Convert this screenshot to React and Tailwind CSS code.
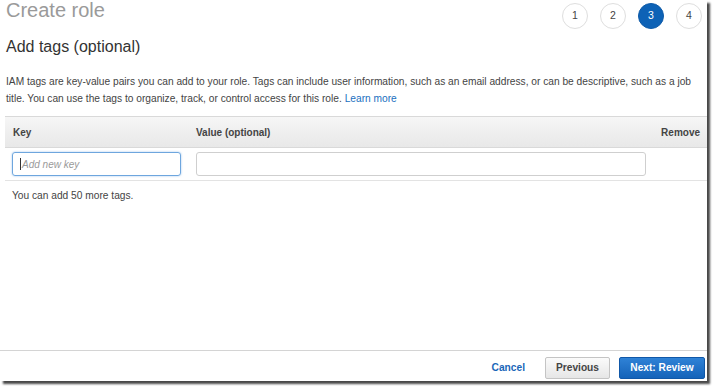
import React from 'react';

// --- Passos do assistente ---
const Step = ({ n, active }) => (
    <div
        className={
            active
                ? 'w-[26px] h-[26px] rounded-full bg-[#0d62b6] border border-[#0d5aa8] flex items-center justify-center text-white text-[10.5px]'
                : 'w-[26px] h-[26px] rounded-full bg-white border border-[#dedede] flex items-center justify-center text-[#444] text-[10.5px]'
        }
    >
        {n}
    </div>
);

export default function App() {
    return (
        <div className="w-[714px] h-[386px] bg-white overflow-hidden" style={{ fontFamily: '"Liberation Sans", Arial, sans-serif' }}>
            <div className="w-[707px] h-[381px] bg-white flex flex-col shadow-[3px_3px_2px_rgba(40,40,40,0.85)]">
                {/* CABEÇALHO */}
                <div className="flex justify-between items-start pl-[6px] pr-[5px]">
                    <h1 className="text-[20px] leading-[20px] text-[#9a9a9a]">Create role</h1>
                    <div className="flex gap-[12px] pt-[3px]">
                        <Step n={1} />
                        <Step n={2} />
                        <Step n={3} active />
                        <Step n={4} />
                    </div>
                </div>

                <h2 className="pl-[6px] mt-[8px] text-[16px] leading-[20px] text-[#333]">Add tags (optional)</h2>

                <p className="pl-[6px] pr-[4px] mt-[17px] text-[10.2px] leading-[16.5px] text-[#444]">
                    IAM tags are key-value pairs you can add to your role. Tags can include user information, such as an email address, or can be descriptive, such as a job title. You can use the tags to organize, track, or control access for this role.{' '}
                    <a href="#" className="text-[#1a70c0]">Learn more</a>
                </p>

                {/* TABELA */}
                <div className="ml-[5px] mt-[9px]">
                    <div className="h-[32px] flex items-center border-y border-[#d9d9d9] bg-gradient-to-b from-[#f6f6f6] to-[#e8e8e8] text-[10px] font-bold text-[#444]">
                        <div className="w-[183px] pl-[8px]">Key</div>
                        <div className="flex-1 pl-[8px]">Value (optional)</div>
                        <div className="pr-[7px]">Remove</div>
                    </div>
                    <div className="flex items-center h-[33px] border-b border-[#e3e3e3]">
                        <div className="w-[191px] pl-[7px]">
                            <div className="w-[169px] h-[24px] rounded-[3px] border border-[#6ea6de] shadow-[0_0_2px_rgba(80,150,220,0.6)] flex items-center pl-[7px] text-[10px] italic text-[#9a9a9a]">
                                <span className="w-px h-[12px] bg-[#333] mr-px"></span>
                                Add new key
                            </div>
                        </div>
                        <div className="w-[450px] h-[24px] rounded-[3px] border border-[#cfcfcf] bg-white"></div>
                    </div>
                    <div className="pl-[7px] mt-[7px] text-[10.2px] leading-[16px] text-[#444]">You can add 50 more tags.</div>
                </div>

                <div className="flex-1"></div>

                {/* RODAPÉ */}
                <div className="h-[31px] border-t border-[#d4d4d4] flex items-start pt-[6px] justify-end pr-[2px]">
                    <a href="#" className="leading-[22px] text-[10.2px] font-bold text-[#1a66b8] mr-[20px]">Cancel</a>
                    <button className="h-[22px] w-[65px] rounded-[2px] border border-[#c4c4c4] bg-gradient-to-b from-[#fbfbfb] to-[#e6e6e6] text-[10.2px] font-bold text-[#444] mr-[9px]">
                        Previous
                    </button>
                    <button className="h-[22px] w-[86px] rounded-[2px] border border-[#1158a8] bg-gradient-to-b from-[#2f82d6] to-[#1463b9] text-[10.2px] font-bold text-white">
                        Next: Review
                    </button>
                </div>
            </div>
        </div>
    );
}
